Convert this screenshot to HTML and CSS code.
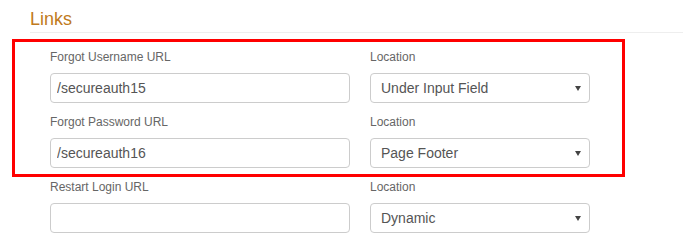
FILE: index.html
```html
<!DOCTYPE html>
<html lang="en">
<head>
    <meta charset="UTF-8">
    <title>Links</title>
    <link rel="stylesheet" href="styles.css">
</head>
<body>
    <div class="panel">
        <h3 class="panel-title">Links</h3>
        <div class="fields">
            <div class="highlight">
                <div class="form-row">
                    <div class="field field-url">
                        <label>Forgot Username URL</label>
                        <input type="text" class="form-control" value="/secureauth15">
                    </div>
                    <div class="field field-loc">
                        <label>Location</label>
                        <div class="select-wrap">
                            <select class="form-control">
                                <option>Under Input Field</option>
                            </select>
                        </div>
                    </div>
                </div>
                <div class="form-row">
                    <div class="field field-url">
                        <label>Forgot Password URL</label>
                        <input type="text" class="form-control" value="/secureauth16">
                    </div>
                    <div class="field field-loc">
                        <label>Location</label>
                        <div class="select-wrap">
                            <select class="form-control">
                                <option>Page Footer</option>
                            </select>
                        </div>
                    </div>
                </div>
            </div>
            <div class="form-row">
                <div class="field field-url">
                    <label>Restart Login URL</label>
                    <input type="text" class="form-control" value="">
                </div>
                <div class="field field-loc">
                    <label>Location</label>
                    <div class="select-wrap">
                        <select class="form-control">
                            <option>Dynamic</option>
                        </select>
                    </div>
                </div>
            </div>
        </div>
    </div>
</body>
</html>
```
FILE: styles.css
```css
* {
    margin: 0;
    padding: 0;
    box-sizing: border-box;
}

body {
    font-family: 'Liberation Sans', Arial, sans-serif;
    background: #fff;
    width: 693px;
    height: 248px;
    overflow: hidden;
}

.panel {
    padding-top: 9px;
}

.panel-title {
    margin: 0 10px 0 30px;
    padding-bottom: 3px;
    font-size: 18px;
    line-height: 20px;
    font-weight: normal;
    color: #c07a20;
    border-bottom: 1px solid #eeeeee;
}

.fields {
    margin-top: 6px;
    margin-left: 12px;
}

.highlight {
    width: 613px;
    border: 3px solid #ff0000;
    padding: 7px 0 6px;
}

.form-row {
    display: flex;
    gap: 20px;
    padding-left: 38px;
    margin-bottom: 11px;
}

.highlight .form-row {
    padding-left: 35px;
}

.highlight .form-row:last-child {
    margin-bottom: 0;
}

.highlight + .form-row {
    margin-top: 2px;
}

.field label {
    display: block;
    font-size: 12px;
    line-height: 17px;
    color: #666;
    margin-bottom: 7px;
}

.field-url {
    width: 300px;
}

.field-loc {
    width: 220px;
}

.form-control {
    display: block;
    width: 100%;
    height: 30px;
    border: 1px solid #ccc;
    border-radius: 4px;
    background: #fff;
    font-family: 'Liberation Sans', Arial, sans-serif;
    font-size: 14px;
    color: #555;
    padding: 0 6px;
    outline: none;
}

select.form-control {
    appearance: none;
    -webkit-appearance: none;
    padding: 0 20px 0 10px;
}

.select-wrap {
    position: relative;
}

.select-wrap::after {
    content: '';
    position: absolute;
    right: 9px;
    top: 13px;
    border-left: 3px solid transparent;
    border-right: 3px solid transparent;
    border-top: 5px solid #444;
}
```
